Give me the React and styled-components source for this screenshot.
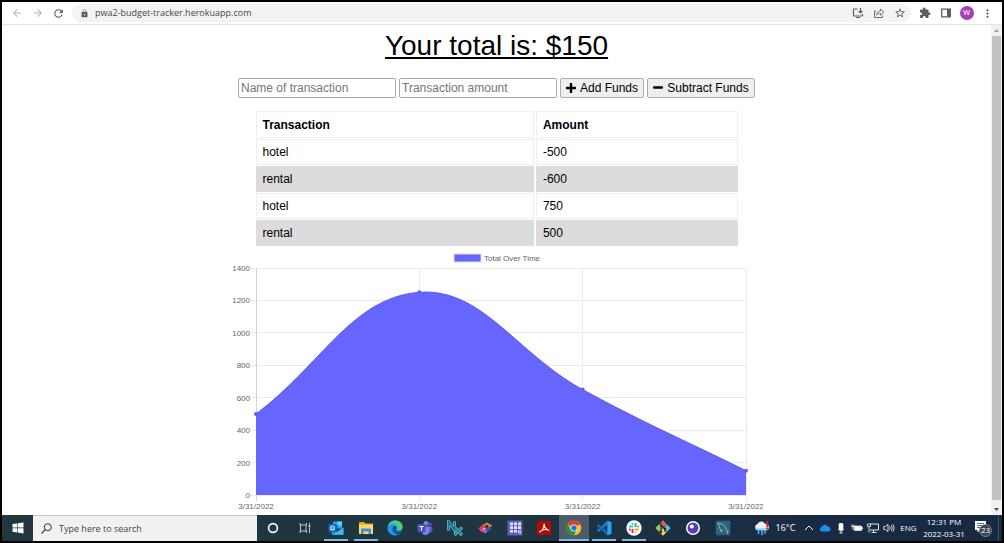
import React from "react";
import styled, { createGlobalStyle } from "styled-components";
import {
  MdArrowBack,
  MdArrowForward,
  MdRefresh,
  MdLock,
  MdStarBorder,
  MdExtension,
  MdMoreVert,
} from "react-icons/md";

const GlobalStyle = createGlobalStyle`
  *, *::before, *::after { box-sizing: border-box; }
  body { margin: 0; background: #fff; color: #000; font: 12px/14px "Liberation Sans", Arial, sans-serif; }
  button, input { font: inherit; color: inherit; margin: 0; }
  svg { display: block; flex: none; }
`;

const uiFont = `"Open Sans", "Noto Sans", sans-serif`;

const Screen = styled.div`
  display: flex;
  flex-direction: column;
  height: 100vh;
  border: 2px solid #000;
`;

/* ---------- browser toolbar ---------- */

const Toolbar = styled.header`
  display: flex;
  align-items: center;
  flex: none;
  height: 23px;
  padding: 0 4px 0 4px;
  border-bottom: 1px solid #e3e4e6;
  background: #fff;
`;

const ToolButton = styled.button`
  display: flex;
  align-items: center;
  justify-content: center;
  flex: none;
  width: 21px;
  height: 20px;
  padding: 0;
  border: 0;
  background: none;
  color: ${(p) => (p.$muted ? "#b4b6b9" : "#5a5d61")};
`;

const Omnibox = styled.div`
  display: flex;
  align-items: center;
  flex: 1;
  height: 18px;
  margin: 0 3px;
  padding: 0 1px 0 8px;
  border-radius: 9px;
  background: #f1f3f4;
  color: #5a5d61;
`;

const Address = styled.input`
  flex: 1;
  min-width: 0;
  height: 16px;
  margin-left: 6px;
  padding: 0;
  border: 0;
  outline: 0;
  background: none;
  color: #44474a;
  font: 9px/16px ${uiFont};
`;

const Avatar = styled.span`
  width: 14px;
  height: 14px;
  border-radius: 50%;
  background: #a83fba;
  color: #fff;
  font: 8px/14px Roboto, sans-serif;
  text-align: center;
`;

/* ---------- web page ---------- */

const Viewport = styled.div`
  display: flex;
  flex: 1;
  min-height: 0;
  overflow: hidden;
`;

const Page = styled.main`
  display: flex;
  flex-direction: column;
  align-items: center;
  flex: 1;
  min-width: 0;
  padding-top: 5px;
  overflow: hidden;
`;

const Total = styled.h1`
  margin: 0 0 16px;
  font-size: 28px;
  line-height: 32px;
  font-weight: 400;
  text-decoration: underline;
`;

const Form = styled.form`
  display: flex;
  gap: 3px;
  margin-bottom: 13px;
`;

const Field = styled.input`
  width: 158px;
  height: 20px;
  padding: 1px 2px;
  border: 1px solid #a9a9a9;
  border-radius: 2px;
  background: #fff;
  &::placeholder {
    color: #757575;
    opacity: 1;
  }
`;

const FundsButton = styled.button`
  display: flex;
  align-items: center;
  justify-content: center;
  gap: 4px;
  min-width: ${(p) => p.$width}px;
  height: 20px;
  padding: 0 4px;
  border: 1px solid #adadad;
  border-radius: 2px;
  background: #efefef;
  white-space: nowrap;
`;

const Table = styled.table`
  width: 486px;
  max-width: 100%;
  margin: -1px 0 0;
  border-spacing: 2px 1px;
  table-layout: fixed;
  text-align: left;
`;

const Cell = styled.td`
  height: 26px;
  padding: 0 6px;
  border: 1px solid ${(p) => (p.$shaded ? "#dcdcdc" : "#eee")};
  background: ${(p) => (p.$shaded ? "#dcdcdc" : "#fff")};
`;

const HeadCell = styled(Cell)`
  height: 27px;
`;

const WideCol = styled.col`
  width: 58%;
`;

const ChartSvg = styled.svg`
  width: 532px;
  max-width: 100%;
  font: 8px "Liberation Sans", Arial, sans-serif;
  fill: #666;
`;

const Scrollbar = styled.div`
  display: flex;
  flex-direction: column;
  flex: none;
  width: 11px;
  background: #f1f1f1;
`;

const ScrollArrow = styled.button`
  display: flex;
  align-items: center;
  justify-content: center;
  height: 11px;
  padding: 0;
  border: 0;
  background: none;
  color: ${(p) => (p.$muted ? "#a3a3a3" : "#505050")};
`;

const ScrollThumb = styled.div`
  flex: 1;
  margin: 0 1px 4px 1px;
  background: #c1c1c1;
`;

/* ---------- taskbar ---------- */

const Taskbar = styled.footer`
  display: flex;
  flex: none;
  height: 26px;
  background: linear-gradient(90deg, #20373f 0%, #1f3541 50%, #182a44 85%, #182a42 100%);
  color: #fff;
  font: 9px/12px ${uiFont};
`;

const TaskButton = styled.button`
  display: flex;
  align-items: center;
  justify-content: center;
  flex: ${(p) => (p.$width ? `0 0 ${p.$width}px` : "1 1 0")};
  min-width: 0;
  padding: 0;
  border: 0;
  background-color: ${(p) => (p.$active ? "#4b5e67" : "transparent")};
  background-image: ${(p) => (p.$open ? "linear-gradient(#76b9ed, #76b9ed)" : "none")};
  background-position: center bottom;
  background-size: ${(p) => (p.$active ? "100%" : "24px")} 2px;
  background-repeat: no-repeat;
`;

const Search = styled.label`
  display: flex;
  align-items: center;
  gap: 7px;
  flex: 0 1 224px;
  padding: 0 8px;
  border-top: 1px solid #c9cdce;
  background: #f1f1f1;
  color: #333;
`;

const SearchInput = styled.input`
  flex: 1;
  min-width: 0;
  padding: 0;
  border: 0;
  outline: 0;
  background: none;
  &::placeholder {
    color: #444;
    opacity: 1;
  }
`;

const Apps = styled.nav`
  display: flex;
  flex: 0 1 417px;
`;

const Tray = styled.div`
  display: flex;
  align-items: center;
  flex: none;
  margin-left: auto;
`;

const TrayItem = styled.button`
  display: flex;
  align-items: center;
  justify-content: center;
  flex: none;
  width: ${(p) => p.$width}px;
  height: 26px;
  padding: 0;
  border: 0;
  background: none;
  white-space: nowrap;
`;

const TrayLabel = styled.span`
  font-size: ${(p) => (p.$small ? 8 : 9)}px;
`;

const ShowDesktop = styled.button`
  width: 4px;
  height: 26px;
  padding: 0;
  border: 0;
  border-left: 1px solid #46556a;
  background: none;
`;

/* ---------- icons ---------- */

const Icon = ({ size = 16, box = 16, children }) => (
  <svg width={size} height={size} viewBox={`0 0 ${box} ${box}`} fill="none" aria-hidden="true">
    {children}
  </svg>
);

const PlusIcon = () => (
  <Icon size={10} box={10}>
    <path d="M5 .8v8.400M.8 5h8.400" stroke="#000" strokeWidth="2.400" strokeLinecap="round" />
  </Icon>
);

const MinusIcon = () => (
  <Icon size={10} box={10}>
    <path d="M1 4.500h8" stroke="#000" strokeWidth="2.400" strokeLinecap="round" />
  </Icon>
);

const InstallIcon = () => (
  <Icon size={12} box={12}>
    <path d="M5.500 2H2.200q-.7 0-.7.7v5.600q0 .7.7.7h7.600q.7 0 .7-.7V7M4 10.500h4" stroke="currentColor" strokeWidth="1.200" />
    <path d="M8.500 1v4M6.600 3.800l1.900 2 1.900-2" stroke="currentColor" strokeWidth="1.200" />
  </Icon>
);

const ShareIcon = () => (
  <Icon size={12} box={12}>
    <path d="M3 4H1.500v6.500h8V8.500" stroke="currentColor" strokeWidth=".9" />
    <path d="M3.500 8C3.800 5.400 5.300 4 7.500 4V2l3.500 3.200-3.500 3.100V6.300C5.800 6.300 4.500 6.800 3.500 8z" stroke="currentColor" strokeWidth=".8" />
  </Icon>
);

const PanelIcon = () => (
  <Icon size={10} box={10}>
    <path d="M.7 1.200h8.600v7.600H.7z" stroke="currentColor" strokeWidth="1.300" />
    <path d="M6 1h3.500v8H6z" fill="currentColor" />
  </Icon>
);

const WindowsIcon = () => (
  <Icon size={12} box={12}>
    <path d="M.5 2.100 5.200 1.400v4.200H.5zM5.800 1.300 11.500.5v5.100H5.800zM.5 6.200h4.700v4.300L.5 9.800zM5.800 6.200h5.700v5.200l-5.700-.8z" fill="#fff" />
  </Icon>
);

const SearchIcon = () => (
  <Icon size={11} box={11}>
    <circle cx="6.800" cy="4.200" r="3.500" stroke="#333" />
    <path d="M4.300 6.700.5 10.500" stroke="#333" strokeWidth="1.100" />
  </Icon>
);

const CortanaIcon = () => (
  <Icon>
    <circle cx="8" cy="8" r="4.400" stroke="#fff" strokeWidth="1.600" />
  </Icon>
);

const TaskViewIcon = () => (
  <Icon>
    <path d="M3 3v2h6.500V3M3 13v-2h6.500v2M3.500 5v6M9 5v6M12.500 3v2.500M12.500 8v5" stroke="#cfd6d9" strokeWidth=".9" />
    <path d="M11.700 5.500h1.600v1.800h-1.600z" fill="#fff" />
  </Icon>
);

const OutlookIcon = () => (
  <Icon>
    <path d="M5 1.500h9v7H5z" fill="#28a8ea" />
    <path d="M9.500 1.500H14v4H9.500z" fill="#50d9ff" />
    <path d="M5 5h4.500v4H5z" fill="#0364b8" />
    <path d="M3.500 7.500 9.500 12l6-4.500V14q0 .8-.8.8H4.300q-.8 0-.8-.8z" fill="#1490df" />
    <path d="m15.500 7.500-11 7.300h10.200q.8 0 .8-.8z" fill="#35b8f1" />
    <rect x=".5" y="4" width="8" height="8" rx=".8" fill="#0f6cbd" />
    <ellipse cx="4.500" cy="8" rx="1.800" ry="2" stroke="#fff" strokeWidth="1.100" />
  </Icon>
);

const FolderIcon = () => (
  <Icon>
    <path d="M1 2h5l1.500 1.500H15V8H1z" fill="#e8a317" />
    <path d="M1 4.500h14V14H1z" fill="#ffd76a" />
    <path d="M3 14V9.500q0-1 1-1h8q1 0 1 1V14h-2.500v-2.500h-5V14z" fill="#3d8fdc" />
  </Icon>
);

const EdgeIcon = () => (
  <Icon>
    <circle cx="8" cy="8" r="7.500" fill="#1679c8" />
    <path d="M.6 7C1.200 3 4.200.5 8 .5c4.500 0 7.500 3 7.500 6.300 0 2.300-1.700 3.900-4 3.900-1.900 0-2.600-.6-2.600-1.100 0-.6.700-.8.700-2C9.600 5.900 8 4.600 5.800 4.600 3.300 4.600 1.200 5.700.6 7z" fill="#37c6b0" />
    <path d="M5 1.200C6 .7 7 .5 8 .5c4.500 0 7.500 3 7.500 6.300 0 2.300-1.700 3.900-4 3.900 2-2 1.500-5.700-1.500-7.400C8.500 2.300 6.500 1.600 5 1.200z" fill="#5bd35b" opacity=".8" />
    <path d="M5.800 7.200C4.600 10 6.500 14 11 14.300c-1 .8-2.700 1.200-4 1C3.500 14.800.8 12 .5 8.500.8 5.800 3.500 4.600 5.800 4.600c2.200 0 3.800 1.300 3.800 3 0-.6-2.500-2.300-3.800-.4z" fill="#1a9adf" />
    <path d="M5.800 7.200C4.600 10 6.500 14 11 14.300c1.500-.5 2.900-1.700 3.700-3.200-4.500 2.300-8.300.4-8.900-3.900z" fill="#0c4fa3" />
    <path d="M8.900 9.600c0-.6.7-.8.700-2 0-.9-1.800-2-3.200-.9.200 3.700 4.600 5.700 8.100 4.100-4 .6-5.600-.3-5.600-1.200z" fill="#20373f" />
  </Icon>
);

const TeamsIcon = () => (
  <Icon>
    <circle cx="13" cy="4.200" r="1.600" fill="#5059c9" />
    <circle cx="9" cy="3.300" r="2.400" fill="#7b83eb" />
    <path d="M11 6.500h4.500V10c0 3-3.500 3.500-4.500 1z" fill="#5059c9" />
    <path d="M5 6.500h7.500V11c0 5-7 5-7.500 1z" fill="#7b83eb" />
    <rect x=".5" y="4.200" width="8" height="8" rx=".8" fill="#4b53bc" />
    <path d="M2.500 6.500h4M4.500 6.500v4" stroke="#fff" strokeWidth="1.100" />
  </Icon>
);

const NxIcon = () => (
  <Icon>
    <path d="M1.500 10.500V1.500L7.500 10V1" stroke="#b9dced" strokeWidth="3" />
    <path d="m7.500 7.500 7.500 7.500M15 7.500 7.500 15" stroke="#b9dced" strokeWidth="3" />
    <path d="M1.500 10.500V1.500L7.500 10V1" stroke="#17708c" strokeWidth="2.100" />
    <path d="m7.500 7.500 7.500 7.500M15 7.500 7.500 15" stroke="#1986a2" strokeWidth="2" />
  </Icon>
);

const RibbonIcon = () => (
  <Icon>
    <path d="m1 8.500 5-4 3.500 2.700-5 3.600z" fill="#e33b4d" />
    <path d="M5.500 5.200 10 2.500l5.500 3.300-3.500 2z" fill="#e5813b" />
    <path d="m6.500 10.500 5.500-4 3 2-6 4.800z" fill="#2d55c5" />
    <path d="m2.500 10.500 3-2 5 2.500-2 2.500z" fill="#d04f9a" />
    <path d="m7.500 6 2.500-1.300 1.800 1.200L9.500 7.500z" fill="#1c3037" />
    <path d="m5.500 9 2-1.300 1.700 1.100-1.700 1.300z" fill="#f1b2a0" />
  </Icon>
);

const GridAppIcon = () => (
  <Icon>
    <rect x=".5" y=".5" width="15" height="15" fill="#5b5fc7" />
    <path d="M3 2.500h3v2.700H3zM7 2.500h3v2.700H7zM11 2.500h3v2.700h-3zM3 6.200h3v2.700H3zM7 6.200h3v2.700H7zM11 6.200h3v2.700h-3zM3 9.900h3v2.700H3zM7 9.900h3v2.700H7z" fill="#e4e5fb" />
    <path d="M11.500 10v3.500M13.500 10.500q-1.500 0-1.500 1.500t1.500 1.500v-3" stroke="#c3c5f2" />
  </Icon>
);

const AcrobatIcon = () => (
  <Icon>
    <rect x="1" y="1" width="14" height="14" rx="1.500" fill="#b30b00" />
    <path d="M3.500 12c2.500-1 4.500-4.500 4.600-8 .4 3.500 2 5.800 4.600 6-3-1-6.200-.6-9.200 2z" stroke="#fff" strokeWidth="1.100" strokeLinejoin="round" />
  </Icon>
);

const ChromeIcon = () => (
  <Icon>
    <circle cx="8" cy="8" r="7.300" fill="#fbc116" />
    <path d="M8 8 1.700 4.350A7.300 7.300 0 0 1 14.300 4.350z" fill="#e33b2e" />
    <path d="M1.700 4.350A7.300 7.300 0 0 0 8 15.300l3-6L5 9.700z" fill="#229342" />
    <circle cx="8" cy="8" r="3.600" fill="#fff" />
    <circle cx="8" cy="8" r="2.800" fill="#1a73e8" />
  </Icon>
);

const CodeIcon = () => (
  <Icon>
    <path d="M11.500.5v4L2.500 12 .8 10.500z" fill="#1482cf" />
    <path d="M11.500 15.500v-4L2.500 4 .8 5.500z" fill="#0b6fbd" />
    <path d="m11.300.5 4.200 1.800v11.400l-4.200 1.800z" fill="#24a6f0" />
  </Icon>
);

const SlackIcon = () => (
  <Icon>
    <circle cx="8" cy="8" r="7.700" fill="#fff" />
    <g strokeWidth="1.900" strokeLinecap="round">
      <path d="M6.500 3.800v.2M3.800 6.500h2.600" stroke="#36c5f0" />
      <path d="M9.500 3.800v2.600M12.200 6.500H12" stroke="#2eb67d" />
      <path d="M12.200 9.500H9.600M9.500 12.200V12" stroke="#ecb22e" />
      <path d="M6.500 12.200V9.600M3.800 9.500H4" stroke="#e01e5a" />
    </g>
  </Icon>
);

const GitIcon = () => (
  <Icon>
    <path d="m8 .3 3.700 3.700L8 7.700 4.300 4z" fill="#ef5b43" />
    <path d="m4 4.300 3.700 3.700L4 11.700.3 8z" fill="#8fc866" />
    <path d="m12 4.300 3.700 3.700-3.700 3.700L8.300 8z" fill="#62b5e6" />
    <path d="m8 8.300 3.700 3.700L8 15.700 4.300 12z" fill="#f6cf4b" />
    <path d="M6 3v10M6 5l4 3.500V12" stroke="#222" strokeWidth="1.100" />
    <circle cx="6" cy="12" r="1.200" fill="#222" />
    <circle cx="10" cy="9" r="1.200" fill="#222" />
  </Icon>
);

const InsomniaIcon = () => (
  <Icon>
    <circle cx="8" cy="8" r="7" fill="#fff" />
    <circle cx="8" cy="8" r="5.500" fill="#5a3bb4" />
    <circle cx="6.800" cy="6.500" r="2" fill="#fff" />
  </Icon>
);

const DolphinIcon = () => (
  <Icon>
    <rect x=".8" y=".8" width="14.400" height="14.400" rx="1" fill="#2a6481" />
    <path d="M2.500 3.500c4-.5 7 1.500 8 4.500.5 1.500 1.200 2.500 3 3l-1.500.7.5 2M2.500 3.500c1.500 1 2 2.500 2.300 4.500l1.500 4 1-2.500" stroke="#a5c1cf" strokeWidth=".9" />
  </Icon>
);

const WeatherIcon = () => (
  <Icon>
    <path d="M4 10a3 3 0 0 1-.5-5.900A4 4 0 0 1 11 4a3 3 0 0 1 1.500 6z" fill="#e6f3fc" />
    <path d="M4 10.500A3 3 0 0 1 1.200 7.500c3 1.200 8 1 13.300-1A3 3 0 0 1 12.500 10.500z" fill="#a4d2f3" />
    <path d="M4.500 10.500v3M8 10.500v4M11 10.500v2.500" stroke="#4aa6ee" strokeWidth="1.700" strokeLinecap="round" />
    <path d="M12 1h2.500l-.5 6h-1.500z" fill="#e81123" />
    <circle cx="13.200" cy="8.600" r="1" fill="#e81123" />
  </Icon>
);

const ChevronIcon = () => (
  <Icon size={10} box={10}>
    <path d="m1 7 4-4 4 4" stroke="#fff" />
  </Icon>
);

const CloudIcon = () => (
  <Icon size={12} box={12}>
    <path d="M2.800 9.500a2.300 2.300 0 0 1-.3-4.500A3.500 3.500 0 0 1 9 4.700 2.400 2.400 0 0 1 9.300 9.500z" fill="#1a91e6" />
  </Icon>
);

const MicIcon = () => (
  <Icon size={12} box={12}>
    <rect x="3.700" y="1" width="4.600" height="7" rx="1.500" fill="#fff" />
    <path d="M3 7.500q3 2.500 6 0M6 9v2M4.300 11h3.400" stroke="#e5e8ec" />
  </Icon>
);

const BatteryIcon = () => (
  <Icon size={12} box={12}>
    <path d="M3.500 4h7v4.500h-7z" fill="#fff" stroke="#cbd1d8" />
    <path d="M11.500 5.200v2M1 2.500v2.300M3 2.500v2.300M.5 4.500h3M2 5v3" stroke="#fff" strokeWidth=".9" />
  </Icon>
);

const MonitorIcon = () => (
  <Icon size={12} box={12}>
    <path d="M3 2h8.500v6H3M6.500 8v2.500M4.500 10.500h5" stroke="#e5e8ec" />
    <path d="M.5 2h3v2.500h-3zM2 4.500v6" stroke="#e5e8ec" strokeWidth=".9" />
  </Icon>
);

const SpeakerIcon = () => (
  <Icon size={12} box={12}>
    <path d="M.7 4.500h1.800L5 2.300v7.400L2.500 7.500H.7zM6.700 4.300q1 1.700 0 3.400M8.300 3.200q1.900 2.800 0 5.600M9.900 2.200q2.700 3.800 0 7.600" stroke="#e5e8ec" strokeWidth=".9" />
  </Icon>
);

const NoticeIcon = () => (
  <svg width="18" height="18" viewBox="0 0 18 18" fill="none" aria-hidden="true">
    <path d="M1 2h11v9H6l-2.500 2.500V11H1z" fill="#fff" />
    <path d="M3 4.500h7M3 6.500h7M3 8.500h4" stroke="#4e5c70" strokeWidth=".9" />
    <circle cx="11.500" cy="11.500" r="6" fill="#3d444e" stroke="#8c939c" strokeWidth=".8" />
    <text x="11.500" y="14" textAnchor="middle" fill="#fff" fontSize="8">23</text>
  </svg>
);

const Triangle = ({ down }) => (
  <svg width="5" height="3" viewBox="0 0 5 3" aria-hidden="true">
    <path d={down ? "M0 0h5L2.500 3z" : "M0 3h5L2.500 0z"} fill="currentColor" />
  </svg>
);

/* ---------- chart ---------- */

const plot = { left: 25, right: 515, top: 21, bottom: 248, max: 1400 };
const series = [
  { label: "3/31/2022", total: 500 },
  { label: "3/31/2022", total: 1250 },
  { label: "3/31/2022", total: 650 },
  { label: "3/31/2022", total: 150 },
];
const ticks = [0, 200, 400, 600, 800, 1000, 1200, 1400];

const xAt = (i) => plot.left + ((plot.right - plot.left) * i) / (series.length - 1);
const yAt = (v) => plot.bottom - ((plot.bottom - plot.top) * v) / plot.max;

// Cubic spline through the points, with a tension of 0.4.
function splinePath(points) {
  const controls = points.map((p, i) => {
    const prev = points[i - 1] || p;
    const next = points[i + 1] || p;
    const before = Math.hypot(p.x - prev.x, p.y - prev.y);
    const after = Math.hypot(next.x - p.x, next.y - p.y);
    const a = (0.4 * before) / (before + after);
    const b = (0.4 * after) / (before + after);
    const dx = next.x - prev.x;
    const dy = next.y - prev.y;
    return { inX: p.x - a * dx, inY: p.y - a * dy, outX: p.x + b * dx, outY: p.y + b * dy };
  });
  return points.reduce((d, p, i) => {
    if (i === 0) return `M${p.x} ${p.y}`;
    const c0 = controls[i - 1];
    const c1 = controls[i];
    return `${d}C${c0.outX} ${c0.outY} ${c1.inX} ${c1.inY} ${p.x} ${p.y}`;
  }, "");
}

function TotalChart() {
  const points = series.map((s, i) => ({ x: xAt(i), y: yAt(s.total) }));
  const line = splinePath(points);
  return (
    <ChartSvg viewBox="0 0 532 267" role="img" aria-label="Total Over Time">
      <rect x="223" y="7" width="27" height="8" fill="#6666ff" stroke="#d9d9e6" strokeWidth="1" />
      <text x="253" y="14">Total Over Time</text>
      <g stroke="#ebebeb" strokeWidth="1" shapeRendering="crispEdges">
        {ticks.map((t) => (
          <path key={t} d={`M${plot.left - 6} ${yAt(t)}H${plot.right}`} />
        ))}
        {series.map((s, i) => (
          <path key={i} d={`M${xAt(i)} ${plot.top}V${plot.bottom + 6}`} stroke={i === 0 ? "#d4d4d4" : undefined} />
        ))}
      </g>
      {ticks.map((t) => (
        <text key={t} x={plot.left - 6} y={yAt(t) + 3} textAnchor="end">{t}</text>
      ))}
      {series.map((s, i) => (
        <text key={i} x={xAt(i)} y="262" textAnchor="middle">{s.label}</text>
      ))}
      <path d={`${line}V${plot.bottom}H${plot.left}Z`} fill="#6666ff" />
      <path d={line} fill="none" stroke="#5c5ce6" strokeWidth="1" />
      {points.map((p, i) => (
        <circle key={i} cx={p.x} cy={p.y} r="2" fill="#6060f0" />
      ))}
    </ChartSvg>
  );
}

/* ---------- data ---------- */

const transactions = [
  ["hotel", "-500"],
  ["rental", "-600"],
  ["hotel", "750"],
  ["rental", "500"],
];

const apps = [
  { name: "Outlook", icon: OutlookIcon, open: true },
  { name: "File Explorer", icon: FolderIcon, open: true },
  { name: "Edge", icon: EdgeIcon },
  { name: "Teams", icon: TeamsIcon },
  { name: "NX", icon: NxIcon },
  { name: "Ribbon", icon: RibbonIcon },
  { name: "Grid", icon: GridAppIcon },
  { name: "Acrobat", icon: AcrobatIcon },
  { name: "Chrome", icon: ChromeIcon, open: true, active: true },
  { name: "Visual Studio Code", icon: CodeIcon, open: true },
  { name: "Slack", icon: SlackIcon, open: true },
  { name: "Git", icon: GitIcon },
  { name: "Insomnia", icon: InsomniaIcon },
  { name: "MySQL Workbench", icon: DolphinIcon },
];

export default function App() {
  return (
    <Screen>
      <GlobalStyle />
      <Toolbar>
        <ToolButton $muted aria-label="Back"><MdArrowBack size={12} /></ToolButton>
        <ToolButton $muted aria-label="Forward"><MdArrowForward size={12} /></ToolButton>
        <ToolButton aria-label="Reload"><MdRefresh size={13} /></ToolButton>
        <Omnibox>
          <MdLock size={9} />
          <Address aria-label="Address" defaultValue="pwa2-budget-tracker.herokuapp.com" />
          <ToolButton aria-label="Install"><InstallIcon /></ToolButton>
          <ToolButton aria-label="Share"><ShareIcon /></ToolButton>
          <ToolButton aria-label="Bookmark"><MdStarBorder size={12} /></ToolButton>
        </Omnibox>
        <ToolButton aria-label="Extensions"><MdExtension size={12} /></ToolButton>
        <ToolButton aria-label="Side panel"><PanelIcon /></ToolButton>
        <ToolButton aria-label="Profile"><Avatar>W</Avatar></ToolButton>
        <ToolButton aria-label="Menu"><MdMoreVert size={13} /></ToolButton>
      </Toolbar>

      <Viewport>
        <Page>
          <Total>Your total is: $150</Total>
          <Form onSubmit={(e) => e.preventDefault()}>
            <Field aria-label="Name of transaction" placeholder="Name of transaction" />
            <Field aria-label="Transaction amount" placeholder="Transaction amount" />
            <FundsButton type="button" $width={84}><PlusIcon />Add Funds</FundsButton>
            <FundsButton type="button" $width={108}><MinusIcon />Subtract Funds</FundsButton>
          </Form>
          <Table>
            <colgroup>
              <WideCol />
              <col />
            </colgroup>
            <thead>
              <tr>
                <HeadCell as="th" scope="col">Transaction</HeadCell>
                <HeadCell as="th" scope="col">Amount</HeadCell>
              </tr>
            </thead>
            <tbody>
              {transactions.map(([name, amount], i) => (
                <tr key={i}>
                  <Cell $shaded={i % 2 === 1}>{name}</Cell>
                  <Cell $shaded={i % 2 === 1}>{amount}</Cell>
                </tr>
              ))}
            </tbody>
          </Table>
          <TotalChart />
        </Page>
        <Scrollbar>
          <ScrollArrow $muted aria-label="Scroll up"><Triangle /></ScrollArrow>
          <ScrollThumb />
          <ScrollArrow aria-label="Scroll down"><Triangle down /></ScrollArrow>
        </Scrollbar>
      </Viewport>

      <Taskbar>
        <TaskButton $width={31} aria-label="Start"><WindowsIcon /></TaskButton>
        <Search>
          <SearchIcon />
          <SearchInput aria-label="Search" placeholder="Type here to search" />
        </Search>
        <TaskButton $width={32} aria-label="Cortana"><CortanaIcon /></TaskButton>
        <TaskButton $width={32} aria-label="Task view"><TaskViewIcon /></TaskButton>
        <Apps>
          {apps.map(({ name, icon: AppIcon, open, active }) => (
            <TaskButton key={name} $open={open} $active={active} aria-label={name}>
              <AppIcon />
            </TaskButton>
          ))}
        </Apps>
        <Tray>
          <TrayItem $width={16} aria-label="Weather"><WeatherIcon /></TrayItem>
          <TrayItem $width={31}><TrayLabel>16°C</TrayLabel></TrayItem>
          <TrayItem $width={16} aria-label="Show hidden icons"><ChevronIcon /></TrayItem>
          <TrayItem $width={16} aria-label="OneDrive"><CloudIcon /></TrayItem>
          <TrayItem $width={16} aria-label="Microphone"><MicIcon /></TrayItem>
          <TrayItem $width={16} aria-label="Battery"><BatteryIcon /></TrayItem>
          <TrayItem $width={16} aria-label="Network"><MonitorIcon /></TrayItem>
          <TrayItem $width={16} aria-label="Volume"><SpeakerIcon /></TrayItem>
          <TrayItem $width={23}><TrayLabel $small>ENG</TrayLabel></TrayItem>
          <TrayItem $width={48}><TrayLabel $small>12:31 PM<br />2022-03-31</TrayLabel></TrayItem>
          <TrayItem $width={30} aria-label="Notifications"><NoticeIcon /></TrayItem>
          <ShowDesktop aria-label="Show desktop" />
        </Tray>
      </Taskbar>
    </Screen>
  );
}
